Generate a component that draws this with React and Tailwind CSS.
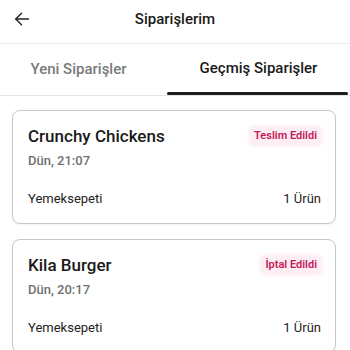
import React from "react";

function Card({ name, date, status }) {
  return (
    <div className="ml-3 mr-[14px] rounded-lg border border-[#c8c8c8] bg-white px-[15px] pt-[13px] pb-[13px] shadow-[0_1px_2px_rgba(0,0,0,0.06)]">
      <div className="flex items-center justify-between">
        <div className="text-[17px] leading-[24px] font-medium text-[#1a1a1a]">{name}</div>
        <div className="mr-[-1px] rounded-[4px] bg-[#fdeef3] px-[4px] py-[2px] text-[11px] leading-[14px] font-semibold text-[#c4195b] shadow-[0_0_4px_rgba(253,220,232,0.9)]">
          {status}
        </div>
      </div>
      <div className="mt-[3px] text-[13px] leading-[20px] font-medium text-[#707070]">{date}</div>
      <div className="mt-[17px] flex items-center justify-between text-[13px] leading-[22px] text-[#222]">
        <span>Yemeksepeti</span>
        <span className="mr-[-1px]">1 Ürün</span>
      </div>
    </div>
  );
}

export default function App() {
  return (
    <div className="h-[350px] w-[350px] overflow-hidden bg-white" style={{ fontFamily: "Roboto, 'Noto Sans', sans-serif" }}>
      <div className="relative flex h-[44px] items-center justify-center border-b border-[#ececec] pb-[4px]">
        <svg className="absolute left-[14px] top-[11px]" width="16" height="16" viewBox="0 0 16 16" fill="none" stroke="#222" strokeWidth="1.4" strokeLinecap="round" strokeLinejoin="round">
          <path d="M14.5 8H1.8" />
          <path d="M7.5 2.2L1.8 8l5.7 5.8" />
        </svg>
        <span className="text-[15px] font-medium text-[#1a1a1a]">Siparişlerim</span>
      </div>
      <div className="flex h-[52px] border-b border-[#e4e4e4]">
        <div className="flex w-[167px] items-center justify-center pr-[10px] text-[15px] font-medium text-[#7a7a7a]">Yeni Siparişler</div>
        <div className="flex flex-1 flex-col">
          <div className="flex flex-1 items-center justify-center text-[15px] font-medium text-[#1a1a1a]">Geçmiş Siparişler</div>
          <div className="mr-[2px] h-[3px] rounded-full bg-[#1f1f1f]" />
        </div>
      </div>
      <div className="flex flex-col gap-[15px] pt-[14px]">
        <Card name="Crunchy Chickens" date="Dün, 21:07" status="Teslim Edildi" />
        <Card name="Kila Burger" date="Dün, 20:17" status="İptal Edildi" />
      </div>
    </div>
  );
}
